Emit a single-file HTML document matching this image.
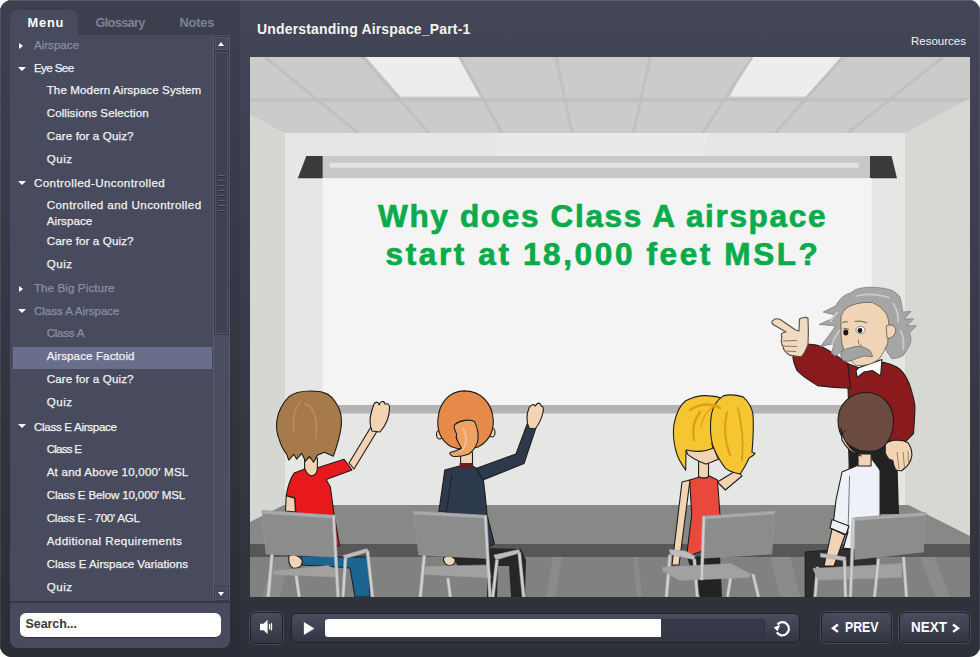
<!DOCTYPE html>
<html><head><meta charset="utf-8">
<style>
*{box-sizing:border-box}
html,body{margin:0;padding:0}
body{width:980px;height:657px;overflow:hidden;background:#ffffff;position:relative;font-family:"Liberation Sans",sans-serif}
.abs{position:absolute}
#player{position:absolute;left:0;top:0;width:980px;height:657px;border-radius:12px 11px 11px 12px;overflow:hidden;background:linear-gradient(#434657,#2e3039)}
#lb{position:absolute;left:0;top:0;width:1px;height:657px;background:linear-gradient(#50546a,#3c3f4c)}
#rb{position:absolute;right:0;top:0;width:1px;height:657px;background:linear-gradient(#50546a,#3c3f4c)}
#side{position:absolute;left:0;top:0;width:240px;height:657px;background:linear-gradient(#3d404f,#2b2d36)}
#topline{position:absolute;left:0;top:0;width:980px;height:1px;background:#555a6c}
#panel{position:absolute;left:10px;top:35px;width:220px;height:613px;background:#474b5d;border-radius:0 0 8px 8px}
#tab{position:absolute;left:10px;top:10px;width:68px;height:26px;background:#474b5d;border-radius:7px 7px 0 0}
.tabt{position:absolute;top:14.5px;font-size:12.8px;font-weight:bold;white-space:nowrap}
.mi{position:absolute;left:0;white-space:nowrap;font-size:11.6px;color:#f2f2f2;line-height:14px;-webkit-text-stroke:0.25px currentColor}
.mi.l1{left:33.9px}
.mi.l2{left:46.7px}
.mi.dis{color:#8a8fa6}
.arr{position:absolute;width:0;height:0}
.arr.r{border-top:3.5px solid transparent;border-bottom:3.5px solid transparent;border-left:4px solid #fff;left:19px}
.arr.d{border-left:4px solid transparent;border-right:4px solid transparent;border-top:4px solid #fff;left:18px}
.btn{background:linear-gradient(#4a4d5f,#333542);border:1px solid #22242c}
.ring{box-shadow:0 0 0 1px #474a56}
.btnt{font-size:14px;font-weight:bold;color:#fff;white-space:nowrap;transform-origin:0 0;transform:scaleX(0.84)}
</style></head>
<body>
<div id="player">
  <div id="side"></div>
  <div id="topline"></div><div id="lb"></div><div id="rb"></div>
</div>
<div id="tab"></div>
<div id="panel"></div>
<div class="tabt" style="left:27.6px;color:#ffffff;letter-spacing:0.8px">Menu</div>
<div class="tabt" style="left:95.5px;color:#7c819a;letter-spacing:-0.7px">Glossary</div>
<div class="tabt" style="left:179.5px;color:#7c819a;letter-spacing:-0.15px">Notes</div>
<!-- menu items: top = baseline - 11 -->
<div id="menu">
<div class="arr r" style="top:43px"></div><div class="mi l1 dis" style="top:38px;letter-spacing:0.014px">Airspace</div>
<div class="arr d" style="top:67px"></div><div class="mi l1" style="top:61px;letter-spacing:-0.600px">Eye See</div>
<div class="mi l2" style="top:83px;letter-spacing:0.100px">The Modern Airspace System</div>
<div class="mi l2" style="top:106px;letter-spacing:0.074px">Collisions Selection</div>
<div class="mi l2" style="top:129px;letter-spacing:0.120px">Care for a Quiz?</div>
<div class="mi l2" style="top:152px;letter-spacing:0.500px">Quiz</div>
<div class="arr d" style="top:181px"></div><div class="mi l1" style="top:176px;letter-spacing:0.414px">Controlled-Uncontrolled</div>
<div class="mi l2" style="top:198px;letter-spacing:0.412px">Controlled and Uncontrolled</div>
<div class="mi l2" style="top:214px;letter-spacing:0.071px">Airspace</div>
<div class="mi l2" style="top:234px;letter-spacing:0.120px">Care for a Quiz?</div>
<div class="mi l2" style="top:257px;letter-spacing:0.500px">Quiz</div>
<div class="arr r" style="top:286px"></div><div class="mi l1 dis" style="top:281px;letter-spacing:0.100px">The Big Picture</div>
<div class="arr d" style="top:309px"></div><div class="mi l1 dis" style="top:304px;letter-spacing:-0.047px">Class A Airspace</div>
<div class="mi l2 dis" style="top:326px;letter-spacing:-0.267px">Class A</div>
<div class="abs" style="left:13px;top:347px;width:199px;height:22px;background:#686e8b"></div>
<div class="mi l2" style="top:349px;letter-spacing:0.100px">Airspace Factoid</div>
<div class="mi l2" style="top:372px;letter-spacing:0.120px">Care for a Quiz?</div>
<div class="mi l2" style="top:395px;letter-spacing:0.500px">Quiz</div>
<div class="arr d" style="top:424px"></div><div class="mi l1" style="top:420px;letter-spacing:-0.300px">Class E Airspace</div>
<div class="mi l2" style="top:442px;letter-spacing:-0.783px">Class E</div>
<div class="mi l2" style="top:465px;letter-spacing:0.204px">At and Above 10,000' MSL</div>
<div class="mi l2" style="top:488px;letter-spacing:-0.171px">Class E Below 10,000' MSL</div>
<div class="mi l2" style="top:511px;letter-spacing:-0.247px">Class E - 700' AGL</div>
<div class="mi l2" style="top:534px;letter-spacing:0.395px">Additional Requirements</div>
<div class="mi l2" style="top:557px;letter-spacing:-0.012px">Class E Airspace Variations</div>
<div class="mi l2" style="top:580px;letter-spacing:0.500px">Quiz</div>
</div>

<!-- scrollbar -->
<div class="abs" style="left:213px;top:35px;width:17px;height:567px;background:#4a4e60;border-left:1px solid #585c6e;border-right:1px solid #555a6c"></div>
<div class="abs" style="left:214px;top:36px;width:15px;height:15px;background:#393c4a"></div>
<div class="abs" style="left:215px;top:37px;width:13px;height:13px;background:#454959;border:1px solid #52566a"></div>
<div class="arr" style="left:218px;top:42px;border-left:3.6px solid transparent;border-right:3.6px solid transparent;border-bottom:4.6px solid #fff"></div>
<div class="abs" style="left:214px;top:51px;width:15px;height:284px;background:#363946"></div>
<div class="abs" style="left:215px;top:52px;width:13px;height:282px;background:#3e4151;border:1px solid #505468"></div>
<div id="grip" class="abs" style="left:218px;top:175px;width:7px;height:40px;background:repeating-linear-gradient(#5b5f73 0 1px,#2d2f3a 1px 2px,transparent 2px 5px)"></div>
<div class="abs" style="left:214px;top:586px;width:15px;height:15px;background:#393c4a"></div>
<div class="abs" style="left:215px;top:587px;width:13px;height:13px;background:#454959;border:1px solid #52566a"></div>
<div class="arr" style="left:218px;top:592px;border-left:3.6px solid transparent;border-right:3.6px solid transparent;border-top:4.6px solid #fff"></div>
<div class="abs" style="left:10px;top:601px;width:220px;height:2px;background:#363946"></div>
<!-- search -->
<div class="abs" style="left:20px;top:612.5px;width:201px;height:25.5px;background:#fff;border-radius:6px;border-bottom:1px solid #2e303a"></div>
<div class="abs" style="left:25.6px;top:617px;font-size:12.5px;font-weight:bold;color:#3a3a3a;white-space:nowrap;letter-spacing:-0.1px">Search...</div>
<!-- title -->
<div class="abs" id="title" style="left:257px;top:20.5px;font-size:14px;letter-spacing:0.16px;font-weight:bold;color:#f4f4f4;white-space:nowrap">Understanding Airspace_Part-1</div>
<div class="abs" id="res" style="left:911px;top:35px;font-size:11.5px;color:#f4f4f4;white-space:nowrap">Resources</div>

<svg class="abs" style="left:250px;top:57px" width="720" height="540" viewBox="250 57 720 540">
<g id="room">
<rect x="250" y="57" width="720" height="540" fill="#cbcbcb"/>
<polygon points="366,57 458,57 480,96.5 400.6,96.5" fill="#ededed"/>
<polygon points="749.6,57 841.4,57 808.4,96.5 730,96.5" fill="#ededed"/>
<g stroke="#c0c0c0" stroke-width="3" fill="none">
<line x1="250" y1="99.7" x2="970" y2="99.7" stroke-width="3.6"/>
<line x1="265" y1="57" x2="358" y2="133"/>
<line x1="362.7" y1="57" x2="428.8" y2="133"/>
<line x1="460" y1="57" x2="502" y2="133"/>
<line x1="556" y1="57" x2="572" y2="133"/>
<line x1="650.4" y1="57" x2="633.3" y2="133"/>
<line x1="752" y1="57" x2="703" y2="133"/>
<line x1="843" y1="57" x2="775.3" y2="133"/>
<line x1="943" y1="57" x2="847.6" y2="133"/>
</g>
<polygon points="285,133 905,133 905,505 285,505" fill="#e6e6e5"/>
<polygon points="494,133 708,133 703,156 499,156" fill="#e9e9e9"/>
<polygon points="250,114.5 285,133 285,505 250,522" fill="#d6d6d2"/>
<polygon points="905,133 970,98.6 970,536 908.4,505 905,505" fill="#d7d7d3"/>
<!-- platform -->
<polygon points="250,522 284,505 908.4,505 970,536 970,597 250,597" fill="#888887"/>
<polygon points="250,544 970,544 970,557 250,557" fill="#575757"/>
<polygon points="250,557 970,557 970,597 250,597" fill="#81817f"/>
<g fill="#8b8b89"><polygon points="553,557 562,557 555,597 546,597"/><polygon points="633,557 638,557 642,597 637,597"/><polygon points="275,557 290,557 280,597 262,597"/><polygon points="770,557 790,557 800,597 780,597"/><polygon points="920,557 935,557 950,597 935,597"/></g>
<!-- screen housing -->
<rect x="322.7" y="156" width="548" height="22.2" fill="#c8c8c8"/>
<rect x="329.6" y="162.8" width="529" height="4.9" fill="#e3e3e3"/>
<polygon points="306.3,156 322.7,156 322.7,178.2 297.8,178.2" fill="#3a3a3a"/>
<polygon points="870,156 891.6,156 897,178.2 870,178.2" fill="#3a3a3a"/>
<rect x="322.7" y="178.2" width="549" height="227" fill="#f4f4f4"/>
<rect x="322.7" y="405" width="549" height="8.5" fill="#b4b4b4"/>
</g>

<g id="chars" stroke="#1d1d1d" stroke-width="1.1" stroke-linejoin="round">
<!-- ===== Einstein (behind) ===== -->
<path d="M848,446 L897,446 L899,514 L850,514 Z" fill="#222" stroke="none"/>
<path d="M847.7,363.6 L858.7,367.7 L883.4,362.3 C890,364 896,366 899.8,369.1 C904,373 907,378 909.4,384.2 C912,392 914,399 914.9,406.1 C915,415 914,425 913.5,433.5 L905.3,441.8 L850,441 L848,388 Z" fill="#8b1a1c"/>
<path d="M792.9,356.8 C798,350 803,346 808,344.4 C813,344 818,345 823,347.2 C832,352 840,358 847.7,363.6 L850.5,388.3 C840,388 828,387 817.6,385.6 C810,381 802,376 797,370.5 C795,366 793,361 792.9,356.8 Z" fill="#8b1a1c"/>
<path d="M856,370.5 L858.7,367.7 L882,359.5 L880.6,376 L872.4,370.5 L864,372 L857.3,377.4 Z" fill="#ffffff"/>
<path d="M885.2,444 C889,441 893,440 896.6,440.2 C901,440 905,441 908,442.7 C911,447 912,451 911.9,455.4 C911.5,458 910.5,461 909.3,463 C907,467 904,469 901.7,470.7 C899,471 897,470.5 895.4,469.4 C894,466 893,463 892.8,460.5 L889,459.2 C887,457 886,455 885.2,452.9 Z" fill="#f2d3b3"/>
<path d="M897,452 L899,469 M903,452 L904.5,468 M908,451 L908.5,464" stroke="#8a6a50" stroke-width="0.8" fill="none"/>
<!-- hand pointing -->
<path d="M772.3,321.1 C775,318 779,319 780.6,319.8 L795.6,330 L799,331 L799.5,319 C802,317 807,317 808,318.4 C808.5,328 808.5,336 808,344.4 C806,350 803,355 801.1,356.8 L790.2,355.4 C786,353 783,349 783,346 C781,344 781,340 782,337.6 C780,334 783,332 786,332 L774,325 C772,324 771.5,322.5 772.3,321.1 Z" fill="#f1dac4" stroke="#5e4a3e"/>
<path d="M783,341 L797,340.5 M783.5,346 L797,346.5 M786,351 L796,351.5" stroke="#6e5646" stroke-width="0.8" fill="none"/>
<!-- hair -->
<path d="M850.6,293 Q855,289 860.2,288.2 Q868,286.5 876.6,287.5 Q885,288 891.7,290.2 Q897,293 900,297 Q902,305 902.7,312 L910.9,311.5 L904,319 L913.6,319 L906.8,325.8 L916.4,325.8 L909.5,332.7 Q911,337 910.9,340.9 Q910,345 908,347.8 Q906,352 902.7,356 Q897,358.5 891.7,358.7 L886.2,350.5 L880,320 L848,318 L842.4,350.5 L835.5,356 L831.4,353.2 L834.2,343.6 L820.5,346.4 L830,334 L835.5,325.8 L819.1,324.5 L831.4,319 L835.5,314.9 L823.2,312.1 L835.5,306 Q839,300 842.4,297 Q846,294 850.6,293 Z" fill="#a6a6a6" stroke="#7f7f7f" stroke-width="0.8"/>
<path d="M856,296 Q872,292 890,298 M893,303 Q899,312 898,322 M900,330 Q905,338 903,350 M838,312 Q832,318 830,322 M840,330 Q834,338 832,344" stroke="#c9c9c9" stroke-width="1.8" fill="none"/>
<path d="M856.1,303.9 Q864,301.5 872.5,302.5 Q881,306 886.2,313.5 Q889,319 889,325.8 L887.6,343.6 Q884,352 879.4,358.7 Q875,362 869.8,364.2 Q863,366 856.1,365.6 Q849,360 845.1,353.2 Q841,344 841,334 L841,316.2 Q843,311 846.5,308 Q851,305 856.1,303.9 Z" fill="#f0d4b6" stroke="#5a4a40" stroke-width="0.7"/>
<path d="M886.2,325.8 Q893,323 895.8,329 Q896,335 890,338.2 L887,338 Z" fill="#f0d4b6" stroke="#5a4a40" stroke-width="0.7"/>
<path d="M842.4,323 Q845,321 848,322 M854.7,321.7 Q861,320 867,323" stroke="#777" stroke-width="1.3" fill="none"/>
<ellipse cx="860.5" cy="330" rx="4.6" ry="3.6" fill="#fff" stroke="#444" stroke-width="0.6"/>
<circle cx="860" cy="330.5" r="2.4" fill="#1a1a1a" stroke="none"/>
<ellipse cx="845.8" cy="332.5" rx="2.5" ry="2.9" fill="#1a1a1a" stroke="none"/>
<path d="M843,329 Q846,327.5 849,329.5" stroke="#5a4a40" stroke-width="0.8" fill="none"/>
<path d="M858.8,339.5 Q857,344 862,346" stroke="#8a6a50" stroke-width="0.9" fill="none"/>
<path d="M841,351.9 Q845,348.5 850.6,347.8 Q856,346 860.2,346.4 Q866,347.5 869.8,350.5 Q872,353 872.5,356.7 L864.3,356 Q860,357 856.1,358.7 Q852,360.5 847.9,361.5 Q844,361.5 842.4,360 Q840,356 841,351.9 Z" fill="#a3a3a3" stroke="#6a6a6a" stroke-width="0.8"/>
<!-- ===== Boy 4 ===== -->
<path d="M805.2,552 L845,549 L875,552 L876,565 L815.3,570 L815.3,597 L805.2,597 Z" fill="#2e2e2e"/>
<path d="M842,472 L857.2,465.6 L871.2,458 L878.8,468.1 L880.1,470.7 L880.1,520 L875,552 L843.3,548 L848,532 L833.1,525.3 L836,500 Z" fill="#eef1f8"/>
<path d="M849.6,475.7 L848,532" stroke="#555" stroke-width="0.8" fill="none"/>
<path d="M832,519.5 L849,526 L846,534.5 L830,528 Z" fill="#eef1f8"/>
<path d="M832,529 L845,535 L834,566 L824,566 Z" fill="#f2d3b3"/>
<path d="M858,454 L871.2,454 L871,466 L858,466 Z" fill="#f2d3b3"/>
<path d="M866,392.5 C882,392.5 893.5,405 893.5,421 C893.5,436 886,447 878,450 C872,452 862,452 856,449 C845,444 838,434 838,420 C838,405 850,392.5 866,392.5 Z" fill="#6c4b40"/>
<path d="M841,428 C843,440 849,450 861,456 C853,454 846,448 842,440 Z" fill="#f2d3b3"/>
<path d="M846,431 C842,431 841,437 845,439" stroke="#1d1d1d" stroke-width="0.8" fill="none"/>
<!-- ===== Boy 1 ===== -->
<path d="M301,555.6 L336,556 L339,557 L368.4,557 L370,597 L355,597 L350,568 L338,567 L301.6,565 Z" fill="#1b6590"/>
<path d="M289,556 C293,553 300,556 302,560 C303,566 299,569 293,568 C289,566 288,560 289,556 Z" fill="#f2d3b3"/>

<path d="M304.6,458 L317.4,458 L317.4,476 L304.6,476 Z" fill="#f2d3b3"/>
<path d="M349,463 L371.5,426 L379,428 L354,469 Z" fill="#f2d3b3"/>
<path d="M372,431 C369,424 370,416 372,410 L374,404 C376,401 379,402 379,405 L380,403 C382,400 385,402 385,404 L386,404 C388,403 390,405 389.5,408 C389.5,416 387,424 380,432 Z" fill="#f2d3b3"/>
<path d="M304.8,468.9 Q308,476 312.3,475.8 Q317,475 317.6,467.8 L344.1,459.2 L352,470 L326.1,479.5 L330.4,487 L334.1,514.7 L339.6,546 L296,546 L295.8,510.4 L294.7,498.1 L286.2,495.5 Q289,480 294.2,473.1 Z" fill="#e8191c"/>
<path d="M286.2,495.8 L294.7,498.1 L295.4,512 L285.5,511 Z" fill="#f2d3b3"/>
<path d="M310.5,391 C300,391 292,394 288.7,396.9 C282,404 278,412 276.9,420.6 C276,428 277,434 278.9,438.4 C281,446 284,451 286.8,454.3 L288.7,460.2 L293.7,454.3 L296.7,459.2 L301.6,453.3 L305.6,461.2 L309.5,456.2 L313.5,462.2 L317.4,455.2 L324.4,452.3 L333.3,456.2 C337,446 340,436 341.2,426.6 C342,418 341,412 338.2,406.8 C334,399 329,394 324.4,392.9 C320,391 315,391 310.5,391 Z" fill="#a77a4a"/>
<!-- ===== Girl 2 ===== -->
<path d="M452,557 L486,557 L486,566 L458,566 Z" fill="#262626" stroke="none"/>
<path d="M443.5,558 C446,555 452,556 455,559 C456,563 453,566 449,565.5 C445,565 443,561 443.5,558 Z" fill="#f2d3b3"/>
<path d="M487,548 L521,549 L526,560 L525,597 L511,597 L509,566 L498,566 L497,597 L487,597 Z" fill="#262626" stroke="none"/>
<path d="M444.8,470 L459.6,466 L472.5,466 L482.4,472 C484,485 486,500 487,515 L494.4,543.7 L487,548 L452,548 L449,515 L446,512 L438.9,511.6 Z" fill="#2d3a4c"/>
<path d="M452,474 L446.5,512" stroke="#1d1d1d" stroke-width="0.9" fill="none"/>
<path d="M476,468.5 L516,454 L527,424.5 L536,427.5 L524,463.5 L483,480 Z" fill="#2d3a4c"/>
<path d="M529,428 C526,421 527,413 529,408 C531,404 534,404 535,406 L537,404 C539,402 541,404 541,406 C543,406 544,409 543,412 C542,418 539,424 535,429 Z" fill="#f2d3b3"/>
<path d="M460.6,452.3 L472.5,452.3 L472.5,466 L460.6,466 Z" fill="#f2d3b3"/>
<path d="M459.6,463 L472.5,463 L472.5,468 L459.6,468 Z" fill="#6a1e1e" stroke="none"/>
<ellipse cx="439.5" cy="434.5" rx="3" ry="4.5" fill="#f2d3b3"/>
<ellipse cx="492" cy="432.5" rx="3" ry="4.5" fill="#f2d3b3"/>
<path d="M464.6,390.9 C480,391 492,402 493.3,420 C494,432 488,442 478,447 C470,450 458,450 450,446 C441,440 437,432 437.9,420 C439,402 450,391 464.6,390.9 Z" fill="#e58a48"/>
<path d="M454.7,424.6 C460,420 470,419 474.5,421.6 C478,428 479,437 477.4,442.4 C475,449 472,452 468.5,454.3 C463,456 457,457 452.7,456.2 C450,455 449,453 450.7,452.3 C455,451 459,450 461.6,448.3 C458,442 455,438 456.7,434.5 C455,430 453,427 454.7,424.6 Z" fill="#f0a262"/>
<!-- ===== Girl 3 ===== -->
<path d="M687,557 L720,555 L722,597 L700,597 Z" fill="#232323" stroke="none"/>
<path d="M682,482 L690,480 L679,565 L672,565 Z" fill="#f2d3b3"/>
<path d="M717.4,482 L737.2,470 L742,476 L725.3,490 Z" fill="#f2d3b3"/>
<path d="M698.6,460 L708.5,460 L708.5,478 L698.6,478 Z" fill="#f2d3b3"/>
<path d="M689.7,480 L699.6,477 C703,479 706,479 709.5,476 L717.4,480 L720,515 L719,545 L686.5,556.7 L691.7,515 Z" fill="#e8493a"/>
<path d="M685,448 L713,446 L718.4,459.2 C712,462 708,464 705.5,464.1 C698,461 692,458 687.7,454.3 Z" fill="#f2d3b3"/>
<path d="M685.7,400.8 C695,396 702,395 709.5,395.9 C715,396 719,397 723.3,398.9 L712,444 L713,448 C705,452 695,452 686,450 L685.7,470.1 C680,462 677,456 675.8,450.3 C673,440 673,432 673.9,424.6 C676,414 680,405 685.7,400.8 Z" fill="#f5c632"/>
<path d="M723.3,395.9 C730,394 737,395 743.1,396.9 C749,402 752,408 753,414.7 C754,428 753,440 752,452.3 L755,453.3 C753,456 751,457 749,458.2 C746,465 743,470 740.1,474 C734,473 729,471 725.3,468.1 C719,460 715,452 712.4,444.4 C710,434 710,424 711.4,414.7 C713,406 717,400 723.3,395.9 Z" fill="#f5c632"/>
</g>
<g id="hairdetail" fill="none" stroke-linecap="round">
<path d="M690,410 C700,403 712,403 720,408" stroke="#e0a010" stroke-width="2.6"/>
<path d="M700,412 C694,420 692,430 694,440" stroke="#e0a010" stroke-width="2.4"/>
<path d="M714,406 C706,412 702,418 701,426" stroke="#e3a514" stroke-width="1.6"/>
<path d="M727,412 C724,425 724,440 730,455" stroke="#e0a010" stroke-width="2.2"/>
<path d="M738,408 C742,425 744,440 742,460" stroke="#e0a010" stroke-width="2"/>
<path d="M463,428 C467,436 468,445 460,452" stroke="#f8c49a" stroke-width="1.4"/>
<path d="M300,402 C294,410 292,420 294,432" stroke="#b98a58" stroke-width="2"/>
<path d="M305,404 C314,406 318,420 316,438" stroke="#b98a58" stroke-width="2"/>
</g>
<!-- ===== chairs ===== -->
<g id="chairs" stroke="#9c9c9c" stroke-width="0.5">
<!-- chair 1 -->
<path d="M270.5,554 L266.6,597 L269.8,597 L273.6,554 Z" fill="#d0d0d0"/>
<path d="M294.6,575 L297.7,597 L300.7,597 L297.6,575 Z" fill="#d0d0d0"/>
<path d="M273.6,571 L328,565.6 L335.7,569.5 L335.7,577 L273.6,574.5 Z" fill="#a1a1a1"/>
<path d="M262,510.5 L331.9,515.2 L335,557 L265.9,554 Z" fill="#8c8c8c"/>
<path d="M262,510.5 L331.9,515.2 L332.1,518.2 L262.3,513.5 Z" fill="#ababab"/>
<path d="M332,515 L335,515 L339.5,597 L336.5,597 Z" fill="#cdcdcd"/>
<path d="M342.7,555.6 L366.8,548.6 L369,551.7 L345,558.7 Z" fill="#bdbdbd"/>
<path d="M344,558 L347,558 L344.5,597 L341.5,597 Z" fill="#d0d0d0"/>
<path d="M366,551 L369,551 L374,597 L371,597 Z" fill="#d0d0d0"/>
<!-- chair 2 -->
<path d="M422.8,555.1 L418.7,597 L421.9,597 L425.9,555.1 Z" fill="#d0d0d0"/>
<path d="M446.4,578 L448.8,597 L451.8,597 L449.4,578 Z" fill="#d0d0d0"/>
<path d="M424.4,566.5 L488,564.9 L491.2,577.9 L424.4,574.6 Z" fill="#a1a1a1"/>
<path d="M413.8,511.2 L483.8,515.2 L487.1,558.4 L418.7,555.1 Z" fill="#8c8c8c"/>
<path d="M413.8,511.2 L483.8,515.2 L484,518.2 L414.1,514.2 Z" fill="#ababab"/>
<path d="M483.8,515.2 L486.8,515.2 L491.5,597 L488.5,597 Z" fill="#cdcdcd"/>
<path d="M493.6,555.1 L518.8,549.4 L520.5,552.7 L496,560 Z" fill="#bdbdbd"/>
<path d="M495.5,560 L498.5,560 L494.3,597 L491.3,597 Z" fill="#d0d0d0"/>
<path d="M517.8,552.7 L520.8,552.7 L525.2,597 L522.2,597 Z" fill="#d0d0d0"/>
<!-- chair 3 -->
<path d="M668.5,554.6 L664.8,597 L668,597 L671.6,554.6 Z" fill="#d0d0d0"/>
<path d="M692.8,559 L695.8,597 L698.8,597 L695.8,559 Z" fill="#d0d0d0"/>
<path d="M729.5,575 L726,597 L729,597 L732.5,575 Z" fill="#d0d0d0"/>
<path d="M751.5,574 L757,597 L760,597 L754.5,574 Z" fill="#d0d0d0"/>
<path d="M662.6,567.2 L730.5,563.5 L750.4,573.8 L749,577.5 L679.5,580.5 L662.6,570.9 Z" fill="#a1a1a1"/>
<path d="M669.2,549.5 L685.4,551 L695,556.1 L694.3,559.8 L670.7,554.6 Z" fill="#bdbdbd"/>
<path d="M703.9,516.2 L774.8,511.1 L771.8,553.9 L702.4,558.3 Z" fill="#8c8c8c"/>
<path d="M703.9,516.2 L774.8,511.1 L774.6,514.1 L703.8,519.2 Z" fill="#ababab"/>
<path d="M702.4,516 L705.4,516 L703.2,580 L700.2,580 Z" fill="#cdcdcd"/>
<!-- chair 4 -->
<path d="M816,567 L819,567 L816.6,597 L813.6,597 Z" fill="#d0d0d0"/>
<path d="M812.8,568.5 L901.7,563.4 L901.7,577.4 L817.9,580 Z" fill="#a1a1a1"/>
<path d="M820.4,553.2 L845.8,557 L845.8,561 L820.4,557 Z" fill="#bdbdbd"/>
<path d="M843,560 L846,560 L847,597 L844,597 Z" fill="#d0d0d0"/>
<path d="M877,559 L880,559 L876,597 L873,597 Z" fill="#d0d0d0"/>
<path d="M902,557 L905,557 L908,597 L905,597 Z" fill="#d0d0d0"/>
<path d="M854.7,517.7 L925.8,512.6 L923.3,552 L854.7,559.6 Z" fill="#8c8c8c"/>
<path d="M854.7,517.7 L925.8,512.6 L925.6,515.6 L854.7,520.7 Z" fill="#ababab"/>
<path d="M852,518 L855,518 L852,597 L849,597 Z" fill="#cdcdcd"/>
</g>
<text x="378" y="226.5" letter-spacing="1.67" font-family="Liberation Sans" font-weight="bold" font-size="31.5" fill="#0aab4b" stroke="#0aab4b" stroke-width="0.7">Why does Class A airspace</text>
<text x="385.6" y="264.8" letter-spacing="2.62" font-family="Liberation Sans" font-weight="bold" font-size="31.5" fill="#0aab4b" stroke="#0aab4b" stroke-width="0.7">start at 18,000 feet MSL?</text>
</svg>
<!-- controls -->
<div class="abs btn ring" style="left:250px;top:612px;width:33px;height:32px;border-radius:6px"></div>
<div class="abs btn" style="left:290.5px;top:612.5px;width:509px;height:30px;border-radius:6px"></div>
<div class="abs" style="left:325px;top:619px;width:440px;height:18px;background:#363947;border:1px solid #2f3240;border-radius:3px"></div>
<div class="abs" style="left:325px;top:619px;width:336px;height:18px;background:#fff;border-radius:3px 0 0 3px"></div>
<div class="abs btn ring" style="left:821px;top:612px;width:71px;height:31px;border-radius:6px"></div>
<div class="abs btn ring" style="left:899px;top:612px;width:71px;height:31px;border-radius:6px"></div>
<div class="abs btnt" style="left:845px;top:619px;transform:scaleX(0.88)">PREV</div>
<div class="abs btnt" style="left:911px;top:619px;transform:scaleX(0.96)">NEXT</div>

<svg class="abs" style="left:0;top:0" width="980" height="657" viewBox="0 0 980 657">
<path d="M260,623.8 L263.6,623.8 L267.6,619.8 L267.6,634 L263.6,630.2 L260,630.2 Z" fill="#fff"/>
<ellipse cx="269.5" cy="626.7" rx="0.75" ry="3.3" fill="#fff"/>
<ellipse cx="271.5" cy="626.8" rx="0.7" ry="4.1" fill="#fff"/>
<path d="M303.9,622 L314.3,628.4 L303.9,634.9 Z" fill="#fff"/>
<path d="M303.9,634.9 L314.3,628.4 L314.3,629.4 L303.9,635.6 Z" fill="#3a8ac0"/>
<path d="M776.8,632.4 A6.6,6.6 0 1 0 777.4,624.4" fill="none" stroke="#fff" stroke-width="2.2"/>
<path d="M773.6,627.4 L780.2,624.8 L777.6,631.2 Z" fill="#fff"/>
<path d="M838,624.5 L833,628.2 L838,631.9" fill="none" stroke="#fff" stroke-width="2.4"/>
<path d="M953,624.5 L958,628.2 L953,631.9" fill="none" stroke="#fff" stroke-width="2.4"/>
</svg>
</body></html>
